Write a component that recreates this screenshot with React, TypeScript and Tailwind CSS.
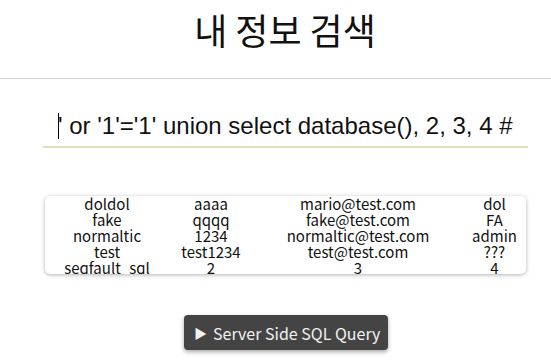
const rows = [
  ['doldol', 'aaaa', 'mario@test.com', 'dol'],
  ['fake', 'qqqq', 'fake@test.com', 'FA'],
  ['normaltic', '1234', 'normaltic@test.com', 'admin'],
  ['test', 'test1234', 'test@test.com', '???'],
  ['seqfault_sql', '2', '3', '4'],
];

const korean = { fontFamily: '"Noto Sans CJK KR", "Noto Sans", sans-serif' };

export default function App() {
  return (
    <div className="w-[551px] h-[363px] bg-white overflow-hidden">
      {/* title */}
      <div className="w-[484px] ml-[43px] pt-[8px] h-[78px]">
        <h1 className="text-center text-[36px] leading-[42px] text-[#111]" style={korean}>
          내 정보 검색
        </h1>
      </div>
      <div className="h-px bg-[#d2d2d2]" />

      {/* search input */}
      <div className="w-[485px] ml-[43px] mt-[27px]">
        <div className="flex items-center h-[40px] pl-[15px]">
          <span className="w-px h-[26px] bg-black -mr-px" />
          <span
            className="text-[24px] text-[#111] whitespace-nowrap"
            style={{ fontFamily: '"Liberation Sans", Arial, sans-serif' }}
          >
            ' or '1'='1' union select database(), 2, 3, 4 #
          </span>
        </div>
        <div className="h-[2px] bg-[#eadcbf]" />
      </div>

      {/* result table */}
      <div
        className="w-[481px] ml-[45px] mt-[48px] h-[78px] overflow-hidden rounded-[5px] bg-white shadow-[0_1px_4px_rgba(0,0,0,0.3)]"
        style={korean}
      >
        {rows.map((r) => (
          <div key={r[0]} className="grid grid-cols-[124px_84px_210px_63px] text-[15px] leading-[16px] text-[#111]">
            {r.map((c, i) => (
              <div key={i} className="text-center whitespace-nowrap">{c}</div>
            ))}
          </div>
        ))}
      </div>

      {/* button */}
      <div className="flex ml-[184px] mt-[41px]">
        <button
          className="w-[204px] h-[35px] rounded-[4px] bg-[#444444] text-[#f2f2f2] text-[16px] flex items-center pl-[10px] gap-[6px] shadow-[0_2px_4px_rgba(0,0,0,0.35)]"
          style={korean}
        >
          <span className="text-[13px]">▶</span>
          <span>Server Side SQL Query</span>
        </button>
      </div>
    </div>
  );
}
